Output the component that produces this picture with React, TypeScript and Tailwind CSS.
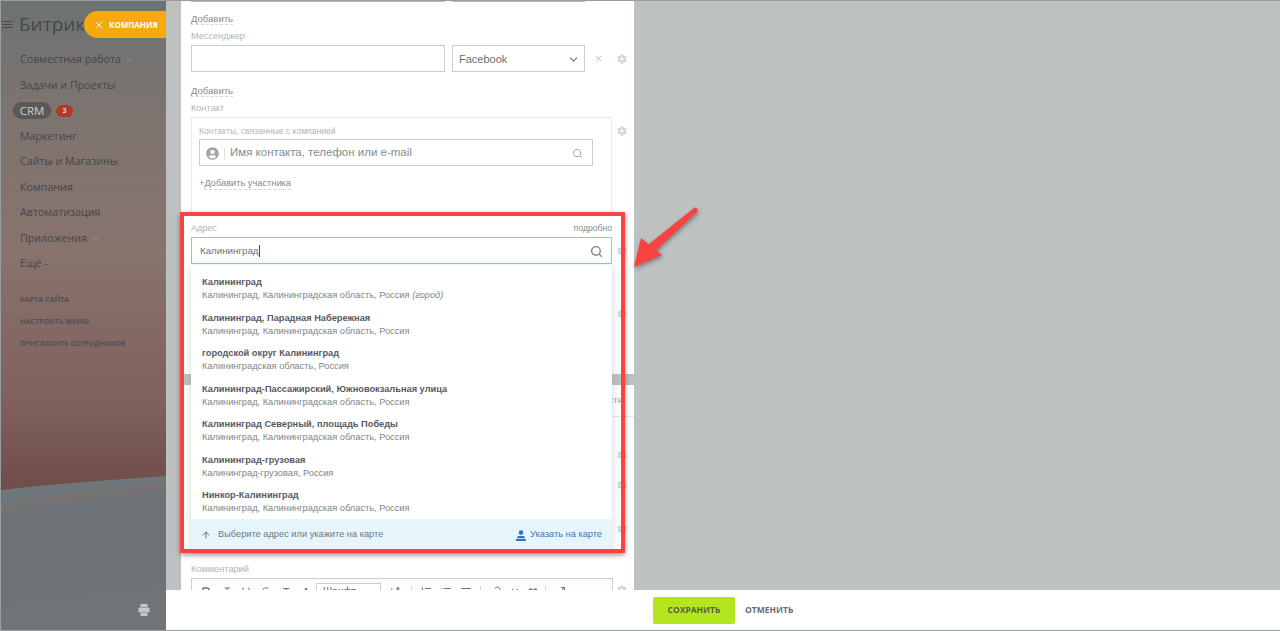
import { ChevronDown, Search, X, ArrowUp, Bold, Italic, Underline, Strikethrough, List, ListOrdered, AlignLeft, Link, Code, Maximize2 } from "lucide-react";
import { FaCog, FaUserCircle, FaQuoteRight } from "react-icons/fa";

const menu = [
  { name: "Совместная работа", arrow: true },
  { name: "Задачи и Проекты" },
  { name: "CRM", badge: "3" },
  { name: "Маркетинг" },
  { name: "Сайты и Магазины" },
  { name: "Компания" },
  { name: "Автоматизация" },
  { name: "Приложения", arrow: true },
  { name: "Ещё -" },
];

const links = ["Карта сайта", "Настроить меню", "Пригласить сотрудников"];

const results = [
  { title: "Калининград", sub: "Калининград, Калининградская область, Россия", note: "(город)" },
  { title: "Калининград, Парадная Набережная", sub: "Калининград, Калининградская область, Россия" },
  { title: "городской округ Калининград", sub: "Калининградская область, Россия" },
  { title: "Калининград-Пассажирский, Южновокзальная улица", sub: "Калининград, Калининградская область, Россия" },
  { title: "Калининград Северный, площадь Победы", sub: "Калининград, Калининградская область, Россия" },
  { title: "Калининград-грузовая", sub: "Калининград-грузовая, Россия" },
  { title: "Нинкор-Калининград", sub: "Калининград, Калининградская область, Россия" },
];

function Gear() {
  return <FaCog className="w-[10px] h-[10px] text-[#d2d5d7] shrink-0" />;
}

function Sidebar() {
  return (
    <aside className="relative w-[165px] shrink-0 overflow-hidden bg-[linear-gradient(180deg,#6d7272_0%,#7d7470_18%,#88736d_40%,#7f5f5b_65%,#6d4c4a_78%)] font-['Open_Sans',sans-serif]">
      <svg className="absolute left-0 bottom-0 w-[165px] h-[160px]" viewBox="0 0 165 160">
        <path d="M0 20 C50 14 110 10 165 6 V160 H0 Z" fill="#6f777b" />
        <path d="M0 34 C50 24 110 18 165 12 V160 H0 Z" fill="#747272" />
        <path d="M0 42 C60 34 110 26 165 20 V160 H0 Z" fill="#6c7275" />
        <path d="M0 133 C60 128 120 120 165 113 V160 H0 Z" fill="#6f7478" />
      </svg>
      <div className="relative">
        <div className="flex items-center h-[26px] mt-[10px]">
          <div className="ml-[1px] flex flex-col gap-[2px] w-[11px]">
            <span className="h-px bg-[#484c4e]" />
            <span className="h-px bg-[#484c4e]" />
            <span className="h-px bg-[#484c4e]" />
          </div>
          <span className="ml-[6px] w-[65px] overflow-hidden text-[19px] leading-[26px] text-[#44494c] whitespace-nowrap">Битрикс</span>
        </div>
        <nav className="mt-[10px] flex flex-col">
          {menu.map((item) =>
            item.badge ? (
              <div key={item.name} className="h-[25.5px] flex items-center pl-[12px]">
                <span className="h-[17px] w-[38px] rounded-full bg-[#5b5857] text-[11.5px] leading-[17px] text-center text-[#cfccca]">{item.name}</span>
                <span className="ml-[5px] h-[12px] w-[17px] rounded-full bg-[#b23a22] text-[7px] font-bold leading-[12px] text-center text-[#eed9d2]">{item.badge}</span>
              </div>
            ) : (
              <div key={item.name} className="h-[25.5px] flex items-center pl-[19px]">
                <span className="text-[10.7px] leading-none whitespace-nowrap text-[#44474a]">{item.name}</span>
                {item.arrow && <ChevronDown className="ml-[4px] w-[9px] h-[9px] text-[#a09e9c]" />}
              </div>
            )
          )}
        </nav>
        <div className="mt-[15px] pl-[19px] flex flex-col gap-[8px]">
          {links.map((l) => (
            <div key={l} className="h-[14px] text-[7.1px] leading-[14px] font-bold uppercase text-[#525155] whitespace-nowrap">{l}</div>
          ))}
        </div>
      </div>
      <svg className="absolute left-[136px] top-[602px] w-[14px] h-[14px]" viewBox="0 0 14 14" fill="#c3c6c8">
        <rect x="3.5" y="1" width="7" height="3" />
        <rect x="1.5" y="4.5" width="11" height="5" rx="1" />
        <rect x="3.5" y="10" width="7" height="3" />
      </svg>
    </aside>
  );
}

function Dashed({ children }: { children: string }) {
  return <span className="text-[#858a8f] border-b border-dashed border-[#d3d6d8] leading-[11px] inline-block">{children}</span>;
}

function Toolbar() {
  const ic = "w-[12px] h-[12px] text-[#70767c] shrink-0";
  return (
    <div className="w-[422px] h-[40px] border border-[#c9cdd0] bg-[#fbfcfc] flex items-start pt-[7px] pl-[8px] gap-[8px] text-[#60666b]">
      <Bold className={ic} strokeWidth={3} />
      <Italic className={ic} />
      <Underline className={ic} />
      <Strikethrough className={ic} />
      <span className="w-[12px] text-[11px] leading-[12px] text-center">T</span>
      <span className="w-[12px] text-[11px] leading-[12px] text-center">A</span>
      <div className="-ml-[4px] -mt-[3px] w-[65px] h-[20px] border border-[#c9cdd0] bg-white text-[10px] leading-[16px] pl-[6px]">Шрифт</div>
      <span className="w-[12px] text-[10px] leading-[12px] text-center">±A</span>
      <span className="ml-[2px] h-[14px] border-l border-[#d4d7d9]" />
      <ListOrdered className={ic} />
      <List className={ic} />
      <AlignLeft className={ic} />
      <span className="h-[14px] border-l border-[#d4d7d9]" />
      <Link className={ic} />
      <Code className={ic} />
      <FaQuoteRight className="w-[8px] h-[8px] mt-[2px] text-[#70767c] shrink-0" />
      <span className="h-[14px] border-l border-[#d4d7d9]" />
      <Maximize2 className={ic} />
    </div>
  );
}

function AddressDropdown() {
  return (
    <div className="absolute left-[10px] top-[264px] w-[421px] bg-white shadow-[0_2px_8px_rgba(80,90,100,0.25)]">
      <div className="pt-[11px] pb-[4px] pl-[11px] flex flex-col gap-[9.5px]">
        {results.map((r) => (
          <div key={r.title} className="text-[9.25px] leading-[13px] whitespace-nowrap">
            <div className="font-bold text-[#565b60]">{r.title}</div>
            <div className="text-[#7f858a]">
              {r.sub} {r.note && <i>{r.note}</i>}
            </div>
          </div>
        ))}
      </div>
      <div className="h-[30px] bg-[#e6f5fc] flex items-center pt-[2px] pl-[10px] pr-[11px] text-[9.25px]">
        <ArrowUp className="w-[10px] h-[10px] text-[#4e5a60]" />
        <span className="ml-[7px] text-[#6f7a82]">Выберите адрес или укажите на карте</span>
        <svg className="ml-auto w-[10px] h-[11px]" viewBox="0 0 10 11" fill="#2c78c8">
          <circle cx="5" cy="2.6" r="2.3" />
          <path d="M1.8 6 H8.2 L9 8.3 H1 Z" />
          <rect x="0" y="9" width="10" height="2" />
        </svg>
        <span className="ml-[4px] w-[71px] whitespace-nowrap text-[#3a78ba]">Указать на карте</span>
      </div>
    </div>
  );
}

function FormPanel() {
  const label = "h-[14px] text-[9.2px] leading-[14px] text-[#b0b5b9]";
  return (
    <div className="relative w-[453px] h-full bg-white pl-[10px] overflow-hidden font-['Liberation_Sans',sans-serif]">
      <div className="flex h-px">
        <span className="w-[254px] bg-[#b8bbbd]" />
        <span className="ml-[7px] w-[133px] bg-[#b8bbbd]" />
      </div>
      <div className="mt-[10px] h-[14px] text-[9.5px]"><Dashed>Добавить</Dashed></div>
      <div className={`mt-[3px] ${label}`}>Мессенджер</div>
      <div className="mt-[2px] h-[27px] flex items-center">
        <div className="w-[254px] h-full border border-[#c9cdd0]" />
        <div className="ml-[7px] w-[133px] h-full border border-[#c9cdd0] flex items-center pt-px pl-[6px] pr-[4px] text-[11px] text-[#6a7075]">
          <span>Facebook</span>
          <ChevronDown className="ml-auto w-[13px] h-[13px] text-[#6f7479]" />
        </div>
        <X className="ml-[9px] w-[9px] h-[9px] text-[#a9adb1]" />
        <span className="ml-[14px]"><Gear /></span>
      </div>
      <div className="mt-[12px] h-[14px] text-[9.5px]"><Dashed>Добавить</Dashed></div>
      <div className={`mt-[3px] ${label}`}>Контакт</div>
      <div className="mt-[2px] flex items-start">
        <div className="w-[421px] h-[98px] border border-[#e8eaeb] px-[7px] pt-[6px]">
          <div className="h-[14px] text-[8.6px] leading-[14px] text-[#b0b5b9]">Контакты, связанные с компанией</div>
          <div className="mt-[1px] w-[394px] h-[27px] border border-[#c9cdd0] flex items-center pt-px pl-[6px] pr-[9px]">
            <FaUserCircle className="w-[13px] h-[13px] text-[#a0a5aa]" />
            <span className="ml-[5px] h-[13px] border-l border-[#e0e2e4]" />
            <span className="ml-[5px] text-[11.5px] text-[#858a8f]">Имя контакта, телефон или e-mail</span>
            <Search className="ml-auto w-[11px] h-[11px] text-[#9ca1a6]" />
          </div>
          <div className="mt-[10px] text-[9.25px] text-[#858a8f] leading-[14px]">+<Dashed>Добавить участника</Dashed></div>
        </div>
        <span className="ml-[5px] mt-[9px]"><Gear /></span>
      </div>
      <div className="mt-[6px] w-[421px] h-[14px] flex justify-between text-[9px] leading-[14px]">
        <span className="text-[#b0b5b9]">Адрес</span>
        <span className="text-[8.6px] text-[#858a8f]">подробно</span>
      </div>
      <div className="mt-[2px] flex items-center">
        <div className="w-[421px] h-[27px] border border-[#8cc4ec] flex items-center pt-px pl-[8px] pr-[8px] text-[9.75px] text-[#6a7075]">
          <span>Калининград</span>
          <span className="h-[12px] border-l border-[#40464a]" />
          <Search className="ml-auto w-[13px] h-[13px] text-[#7d8388]" strokeWidth={2.5} />
        </div>
        <span className="ml-[5px]"><Gear /></span>
      </div>
      <div className="h-[110px] pt-[45px] pl-[426px]"><Gear /></div>
      <div className="-ml-[10px] h-[11px] bg-[#bdc1c1]" />
      <div className="h-[32px] border-b border-[#e4e6e8] flex items-center justify-end pr-[11px] text-[9.5px] text-[#9ca1a6]">подробности</div>
      <div className="h-[33px] pt-[33px] pl-[426px]"><Gear /></div>
      <div className="h-[30px] pt-[30px] pl-[426px]"><Gear /></div>
      <div className="h-[44px] pt-[44px] pl-[426px]"><Gear /></div>
      <div className={`mt-[38px] ${label}`}>Комментарий</div>
      <div className="mt-[2px] flex items-start">
        <Toolbar />
        <span className="ml-[4px] mt-[7px]"><Gear /></span>
      </div>
      <AddressDropdown />
    </div>
  );
}

export default function App() {
  return (
    <div className="relative w-[1280px] h-[631px] overflow-hidden flex border-y border-l border-[#9a9d9e] bg-white">
      <Sidebar />
      <main className="flex-1 min-w-0 flex flex-col">
        <div className="flex-1 min-h-0 bg-[#bdc1c1] pl-[15px] overflow-hidden">
          <FormPanel />
        </div>
        <footer className="h-[40px] shrink-0 bg-white flex items-center pl-[487px] font-['Open_Sans',sans-serif] text-[8.5px] font-bold">
          <button className="w-[82px] h-[27px] rounded-[2px] bg-[#b3e61c] text-[#556136]">СОХРАНИТЬ</button>
          <button className="ml-[10px] text-[#666c74]">ОТМЕНИТЬ</button>
        </footer>
      </main>

      {/* компания pill */}
      <div className="absolute left-[83px] top-[10px] w-[82px] h-[27px] rounded-l-full bg-[#f6a80d] flex items-center pl-[9px] font-['Open_Sans',sans-serif] text-white">
        <X className="w-[12px] h-[12px]" strokeWidth={2} />
        <span className="ml-[4px] text-[8px] font-bold">КОМПАНИЯ</span>
      </div>

      {/* annotation */}
      <div className="absolute left-[179px] top-[211px] w-[445px] h-[341px] border-[4px] border-[#f94242] shadow-[0_2px_5px_rgba(0,0,0,0.4)] pointer-events-none" />
      <svg className="absolute left-[630px] top-[200px] w-[72px] h-[72px]" viewBox="0 0 72 72">
        <g fill="#f94242" style={{ filter: "drop-shadow(1px 2px 2px rgba(0,0,0,0.35))" }}>
          <path d="M3 66 L10 37 L31 54 Z" />
          <path d="M63 7 C65 5 68 9 66 11 L24 50 L18 43 Z" />
        </g>
      </svg>
    </div>
  );
}
